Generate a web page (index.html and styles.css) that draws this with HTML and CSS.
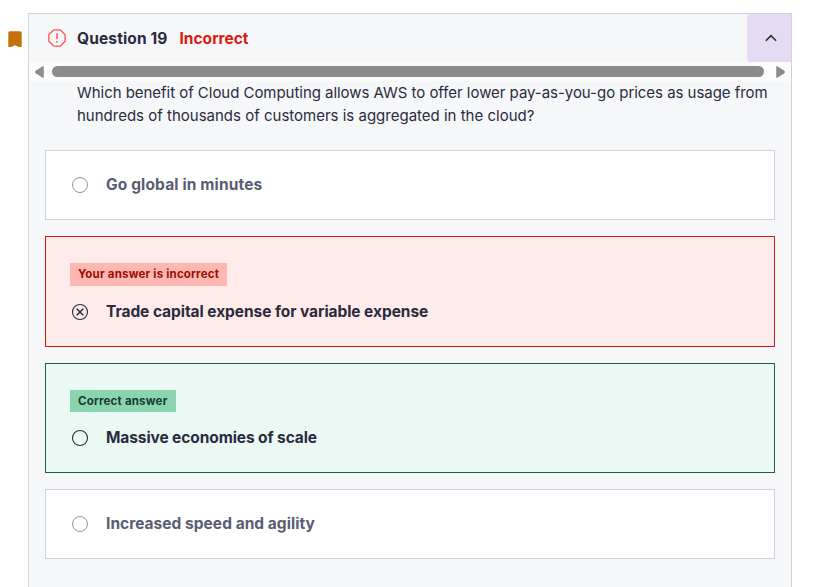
FILE: index.html
```html
<!DOCTYPE html>
<html lang="en">
<head>
<meta charset="utf-8">
<title>Question 19</title>
<link rel="stylesheet" href="styles.css">
</head>
<body>
<main class="review">
  <div class="bookmark">
    <svg width="14" height="17" viewBox="0 0 14 17"><path d="M2 0.3h10a1.7 1.7 0 0 1 1.7 1.7v14H11L7 14.300L3 16H0.300V2A1.700 1.700 0 0 1 2 0.300z" fill="#c4710d"/></svg>
  </div>
  <section class="panel">
    <header class="header">
      <svg class="alert" width="18" height="18" viewBox="0 0 18 18" fill="none" stroke="#ff5249" stroke-width="1.3"><path d="M5.700 0.900h6.600l4.800 4.800v6.600l-4.800 4.800H5.700L0.900 12.300V5.700z" stroke-linejoin="round"/><path d="M9 4.300v5.700M9 12v1.700" stroke-width="1.500"/></svg>
      <h1 class="title">Question 19</h1>
      <span class="status">Incorrect</span>
      <button class="toggle" aria-label="Collapse"><svg width="12" height="8" viewBox="0 0 12 8" fill="none" stroke="#2a2b3f" stroke-width="1.600"><path d="M0.900 6.700L6 1.600l5.100 5.100"/></svg></button>
    </header>
    <div class="scrollbar">
      <svg width="9" height="12" viewBox="0 0 9 12"><path d="M8.200 0.500v11L1 7Q0 6 1 5z" fill="#8b8b8b" stroke="#8b8b8b" stroke-linejoin="round"/></svg>
      <div class="thumb"></div>
      <svg width="9" height="12" viewBox="0 0 9 12"><path d="M0.800 0.500v11L8 7Q9 6 8 5z" fill="#8b8b8b" stroke="#8b8b8b" stroke-linejoin="round"/></svg>
    </div>
    <p class="prompt"><span class="line1">Which benefit of Cloud Computing allows AWS to offer lower pay-as-you-go prices as usage from</span><br><span class="line2">hundreds of thousands of customers is aggregated in the cloud?</span></p>
    <div class="answers">
      <div class="answer">
        <div class="choice"><svg width="18" height="18" viewBox="0 0 18 18" fill="none" stroke="#9194ac"><circle cx="9" cy="9" r="7.500"/></svg><span class="a1">Go global in minutes</span></div>
      </div>
      <div class="answer wrong">
        <span class="badge">Your answer is incorrect</span>
        <div class="choice"><svg width="18" height="18" viewBox="0 0 18 18" fill="none" stroke="#2a2b3f"><circle cx="9" cy="9" r="7.500" stroke-width="1.100"/><path d="M5.700 5.700l6.600 6.600M12.300 5.700l-6.600 6.600" stroke-width="1.500"/></svg><span class="a2">Trade capital expense for variable expense</span></div>
      </div>
      <div class="answer right">
        <span class="badge">Correct answer</span>
        <div class="choice"><svg width="18" height="18" viewBox="0 0 18 18" fill="none" stroke="#2a2b3f"><circle cx="9" cy="9" r="7.500" stroke-width="1.100"/></svg><span class="a3">Massive economies of scale</span></div>
      </div>
      <div class="answer">
        <div class="choice"><svg width="18" height="18" viewBox="0 0 18 18" fill="none" stroke="#9194ac"><circle cx="9" cy="9" r="7.500"/></svg><span class="a4">Increased speed and agility</span></div>
      </div>
    </div>
  </section>
</main>
</body>
</html>
```
FILE: styles.css
```css
* { box-sizing: border-box; }
body { margin: 0; background: #fff; color: #2a2b3f; font: 15px/23px Inter, "Liberation Sans", sans-serif; overflow: hidden; }
svg { display: block; flex: none; }
.review { display: flex; height: 587px; padding-top: 13px; }
.bookmark { width: 28px; padding: 18px 0 0 8px; }
.panel { width: 764px; border: 1px solid #d1d2e0; border-bottom: 0; background: #f6f7f9; }
.header { display: flex; align-items: center; height: 48px; padding-left: 19px; font-size: 15.5px; }
.title { margin: 0 0 0 11px; font-size: 15.5px; font-weight: 700; width: 102.5px; letter-spacing: 0.13px; white-space: nowrap; }
.status { color: #d91a0f; font-weight: 700; }
.toggle { display: flex; align-items: center; justify-content: center; width: 44px; height: 48px; margin-left: auto; padding: 0 0 0 4px; border: 0; border-radius: 4px 0 0 4px; background: #e5dcf4; }
.scrollbar { display: flex; align-items: center; justify-content: space-between; height: 19px; padding: 0 6px; background: #fcfcfc; }
.thumb { width: 712px; height: 11px; margin-right: 4px; border-radius: 6px; background: #8b8b8b; }
.prompt { margin: 0 0 0 48px; height: 69px; white-space: nowrap; }
.line1 { letter-spacing: -0.04px; }
.answers { display: flex; flex-direction: column; gap: 16px; padding: 0 16px; }
.answer { height: 70px; padding: 22px 24px; border: 1px solid #d1d2e0; background: #fff; color: #595c73; font-size: 15.5px; font-weight: 700; }
.choice { display: flex; align-items: center; gap: 17px; padding-left: 1px; height: 24px; white-space: nowrap; }
.choice span { margin-top: -2px; }
.a1 { letter-spacing: 0.13px; }
.a2 { letter-spacing: -0.06px; }
.a3 { letter-spacing: -0.1px; }
.a4 { letter-spacing: 0.03px; }
.wrong, .right { color: #2a2b3f; }
.wrong { height: 111px; padding-top: 26px; border-color: #d91a0f; background: #ffecea; }
.right { height: 110px; padding-top: 26px; border-color: #206344; background: #eaf9f4; }
.badge { display: block; width: 157px; height: 23px; margin-bottom: 14px; padding-left: 8px; background: #ffb7b1; color: #9b0b05; font-size: 11.5px; line-height: 22px; letter-spacing: 0.2px; white-space: nowrap; }
.right .badge { width: 106px; height: 22px; background: #8cd4b0; color: #153d2d; }
```
